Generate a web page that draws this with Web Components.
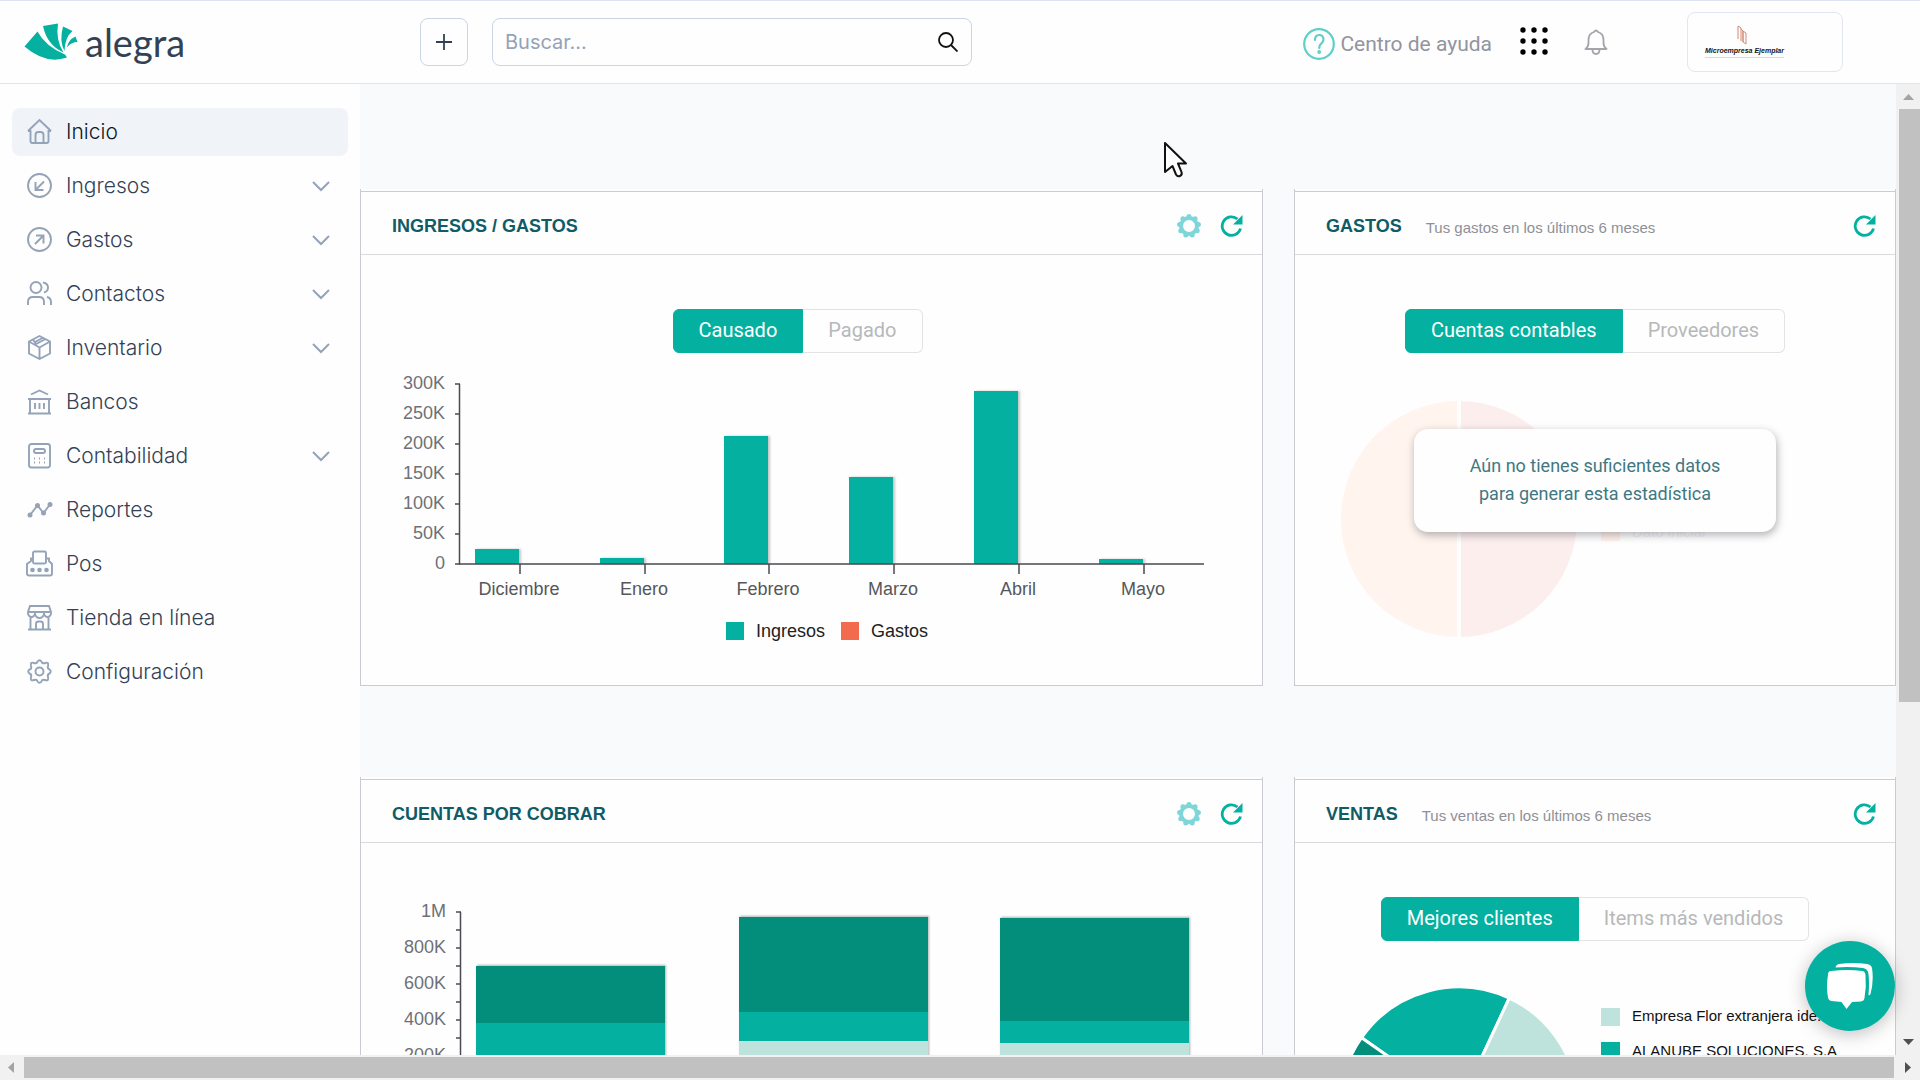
<!DOCTYPE html>
<html lang="es">
<head>
<meta charset="UTF-8">
<meta name="viewport" content="width=device-width, initial-scale=1">
<title>Alegra</title>
<style>
  body {
    margin: 0;
    height: 100vh;
    display: grid;
    grid-template-columns: 360px 1fr 24px;
    grid-template-rows: 84px 1fr 25px;
    overflow: hidden;
    background: #fefefe;
    color: #334155;
    font-family: 'Liberation Sans', Arial, sans-serif;
    --teal: #04b1a0;
    --teal-dark: #028e7a;
    --teal-light: #bde3dc;
  }
  app-header { grid-column: 1 / -1; }
  main {
    background: #f8fafc;
    overflow: hidden;
    padding-top: 105px;
    display: grid;
    grid-template-columns: 3fr 2fr;
    grid-auto-rows: max-content;
    gap: 91px 31px;
  }
  .horizontal { grid-column: 1 / -1; }
</style>
</head>
<body>
  <app-header></app-header>

  <side-menu>
    <menu-item icon="home" active>Inicio</menu-item>
    <menu-item icon="income" expandable>Ingresos</menu-item>
    <menu-item icon="expense" expandable>Gastos</menu-item>
    <menu-item icon="contacts" expandable>Contactos</menu-item>
    <menu-item icon="inventory" expandable>Inventario</menu-item>
    <menu-item icon="bank">Bancos</menu-item>
    <menu-item icon="calculator" expandable>Contabilidad</menu-item>
    <menu-item icon="reports">Reportes</menu-item>
    <menu-item icon="pos">Pos</menu-item>
    <menu-item icon="store">Tienda en línea</menu-item>
    <menu-item icon="settings">Configuración</menu-item>
  </side-menu>

  <main>
    <panel-card title-text="Ingresos / Gastos" configurable>
      <toggle-group class="shift" options="Causado|Pagado"></toggle-group>
      <bar-chart></bar-chart>
    </panel-card>
    <panel-card title-text="Gastos" subtitle="Tus gastos en los últimos 6 meses">
      <toggle-group options="Cuentas contables|Proveedores"></toggle-group>
      <empty-pie>Aún no tienes suficientes datos<br>para generar esta estadística</empty-pie>
    </panel-card>
    <panel-card title-text="Cuentas por cobrar" configurable>
      <stacked-chart></stacked-chart>
    </panel-card>
    <panel-card title-text="Ventas" subtitle="Tus ventas en los últimos 6 meses">
      <toggle-group options="Mejores clientes|Items más vendidos"></toggle-group>
      <sales-pie></sales-pie>
    </panel-card>
  </main>

  <scroll-bar></scroll-bar>
  <scroll-bar class="horizontal" horizontal></scroll-bar>
  <chat-button></chat-button>
  <mouse-pointer></mouse-pointer>

<script>
// Iconos compartidos del menú lateral
const ICONS = {
  home: '<path d="M1 12 12.500 1 24 12M1 12h2.500v10q0 2 2 2h14q2 0 2-2V12H24"/><path d="M8.500 24v-8q0-3 3-3h2q3 0 3 3v8"/>',
  income: '<circle cx="12.500" cy="12.500" r="11.500"/><path d="M17 8.500 8.500 17M8.500 9v8h8"/>',
  expense: '<circle cx="12.500" cy="12.500" r="11.500"/><path d="M8 17l8.500-8.500M9 8.500h7.500v8"/>',
  contacts: '<circle cx="9" cy="6.500" r="5.500"/><path d="M1 24v-3q0-5 5-5h6q5 0 5 5v3M16 1.500q5 1 5 5t-4 5M20 16q4 1 4 5v3"/>',
  inventory: '<path d="M12.500 1 23 6.500v12L12.500 24 2 18.500v-12zM2 6.500l10.500 6 10.500-6M12.500 12.500V24M6 4.500l3 4.500 9.500-5M15.500 3 7 7.500"/>',
  bank: '<path d="M4 5.500 12.500 1.500 21 5.500M1 10h23M3 10v14M22 10v14M1 24.500h23M8 14v6M12.500 14v6M17 14v6"/>',
  calculator: '<rect x="2" y="1" width="21" height="23.500" rx="2.500"/><rect x="7" y="6" width="11" height="4" rx="2"/><path d="M7 15.500h1M12 15.500h1M17 15.500h1M7 19.500h1M12 19.500h1M17 19.500h1"/>',
  reports: '<path d="M3 18 10.500 8.500 16.500 16 23 7.500"/><g fill="currentColor" stroke="none"><circle cx="3" cy="18" r="2.500"/><circle cx="10.500" cy="8.500" r="2.500"/><circle cx="16.500" cy="16" r="2.500"/><circle cx="23" cy="7.500" r="2.500"/></g>',
  pos: '<rect x="6" y="0.500" width="13" height="12" rx="1.500"/><path d="M6 7.500H4V10L0 13v9.500q0 2 2 2h21q2 0 2-2V13l-3-3V7.500h-3"/><g fill="currentColor" stroke="none"><circle cx="5.500" cy="19" r="2.300"/><circle cx="12.500" cy="19" r="2.300"/><circle cx="19.500" cy="19" r="2.300"/></g>',
  store: '<path d="M3 1h19l2 6v2q-1 3-3.500 3T17 9q-1 4-4.500 4T8 9q-1 3-3.500 3T1 9V7zM2 7h21M3.500 12v12.500M21.500 12v12.500M1 24.500h23M9 24v-5q0-2.500 2.500-2.500h2Q16 16.500 16 19v5M8 7v2M17 7v2"/>',
  settings: '<circle cx="12.500" cy="12.500" r="4"/><path d="M10.500 2.500Q12.500 0 14.500 2.500 15 5 18 4 22 2.500 21 7q-1 2.500 1.500 3.500Q25 12.500 22.500 14.500 20 15.500 21 18q1 4.500-3 3-3-1-3.500 1.500-2 2.500-4 0Q10 20 7 21q-4 1.500-3-3 1-2.500-1.500-3.500Q0 12.500 2.500 10.500 5 9.500 4 7 3 2.500 7 4q3 1 3.500-1.500z"/>'
};

// Clase base: cada componente devuelve su plantilla en template()
class BaseElement extends HTMLElement {
  connectedCallback() {
    if (this.shadowRoot) return;
    const template = document.createElement('template');
    template.innerHTML = this.template();
    this.attachShadow({ mode: 'open' }).appendChild(template.content.cloneNode(true));
  }
}

// Barra superior
class AppHeader extends BaseElement {
  template() {
    return `
      <style>
        :host {
          display: grid;
          grid-template-columns: 420px 1fr auto;
          align-items: center;
          box-sizing: border-box;
          border-top: 1px solid #dfe3f1;
          border-bottom: 1px solid #e0e6ee;
          background: #fefefe;
        }
        a { color: inherit; text-decoration: none; }
        .brand { display: flex; align-items: center; gap: 7px; padding: 0 0 0 24px; height: 48px; }
        .brand span { font: 400 38px/48px Lato, sans-serif; color: #334155; }
        .tools { display: flex; gap: 24px; }
        button { border: 0; background: none; padding: 0; color: inherit; display: block; }
        .add, .search { box-sizing: border-box; height: 48px; border: 1px solid #cbd5e8; border-radius: 8px; }
        .add { width: 48px; display: grid; place-items: center; color: #334155; }
        .search { width: 480px; display: flex; align-items: center; padding: 0 13px 0 12px; color: #111; }
        input { flex: 1; min-width: 0; border: 0; outline: 0; padding: 0; background: none; font: 20px/24px Inter, sans-serif; color: #334155; }
        input::placeholder { color: #94a3b8; opacity: 1; }
        .right { display: flex; align-items: center; padding-right: 77px; }
        .help { display: flex; align-items: center; gap: 5px; margin-top: 3px; font: 21px/32px Roboto, sans-serif; color: #9294a0; }
        .apps { margin: 0 36px 0 28px; }
        .bell { margin: 3px 79px 0 0; }
        .company {
          box-sizing: border-box; width: 156px; height: 60px; padding: 12px 0 0 17px;
          border: 1px solid #e2e6f3; border-radius: 8px;
          display: flex; flex-direction: column; align-items: flex-start;
        }
        .company svg { margin-left: 32px; }
        .company span { font: italic bold 7px/12px 'Liberation Sans', sans-serif; color: #111; border-bottom: 1px solid #f3cfc8; white-space: nowrap; }
      </style>
      <a class="brand" href="#" aria-label="Alegra">
        <svg width="54" height="38" viewBox="24 23 54 38" fill="#04b1a0">
          <path d="M24.500 46.500 37.500 31.500Q45 46 65 54.500L67 57.500Q46 65 24.500 46.500z"/>
          <path d="M43 26 58 23.500Q55.500 40 63.500 52.500 47 45 43 26z"/>
          <path d="M63 26.500 72.500 31Q65 37 64.500 51 59 41 63 26.500z"/>
          <path d="M75.500 36.500 77.500 42Q71 42 67 47.500 68 40 75.500 36.500z"/>
        </svg>
        <span>alegra</span>
      </a>
      <div class="tools">
        <button class="add" aria-label="Nuevo">
          <svg width="16" height="16" viewBox="0 0 16 16" stroke="currentColor" stroke-width="1.800"><path d="M8 0v16M0 8h16"/></svg>
        </button>
        <label class="search">
          <input type="search" placeholder="Buscar..." aria-label="Buscar">
          <svg width="20" height="20" viewBox="0 0 20 20" fill="none" stroke="currentColor" stroke-width="1.800"><circle cx="8" cy="8" r="7"/><path d="M13 13l6.500 6.500"/></svg>
        </label>
      </div>
      <div class="right">
        <a class="help" href="#">
          <svg width="32" height="32" viewBox="0 0 32 32" fill="none" stroke="#5fcfc9" stroke-width="2.200"><circle cx="16" cy="16" r="14.800"/><path d="M12 12q0-5 4.200-5t4.300 4.500q0 2.500-2.300 4.200-2 1.500-2 4.300" stroke-linecap="round"/><circle cx="16.200" cy="24" r=".8"/></svg>
          Centro de ayuda
        </a>
        <button class="apps" aria-label="Aplicaciones">
          <svg width="28" height="28" viewBox="0 0 28 28" fill="#000">
            ${[3, 14, 25].map(y => [3, 14, 25].map(x => `<circle cx="${x}" cy="${y}" r="2.700"/>`).join('')).join('')}
          </svg>
        </button>
        <button class="bell" aria-label="Notificaciones">
          <svg width="24" height="26" viewBox="0 0 24 26" fill="none" stroke="#a3a5ab" stroke-width="1.800" stroke-linejoin="round"><path d="M1.500 20q3-2.500 3-6v-3q0-6.500 5.500-8 2-3 4 0 5.500 1.500 5.500 8v3q0 3.500 3 6zM8.500 20.500q0 4.500 3.500 4.500t3.500-4.500"/></svg>
        </button>
        <a class="company" href="#">
          <svg width="10" height="20" viewBox="0 0 10 20" fill="none" stroke="#d08a70"><path d="M1 1v13M1 1l3 2v13M4 4l2 2v11M6 6l3 2v11L6 17z"/></svg>
          <span>Microempresa Ejemplar</span>
        </a>
      </div>
    `;
  }
}

// Menú lateral
class SideMenu extends BaseElement {
  template() {
    return `
      <style>
        :host { display: block; background: #fefefe; padding: 24px 12px; box-sizing: border-box; overflow: hidden; }
        nav { display: flex; flex-direction: column; gap: 6px; }
      </style>
      <nav><slot></slot></nav>
    `;
  }
}

class MenuItem extends BaseElement {
  template() {
    const chevron = this.hasAttribute('expandable')
      ? '<svg class="chevron" width="18" height="12" viewBox="0 0 18 12"><path d="M1 2l8 8 8-8"/></svg>'
      : '';
    return `
      <style>
        :host { display: block; border-radius: 8px; }
        :host([active]) { background: #f0f4f9; color: #0f172a; }
        a {
          display: flex; align-items: center; height: 48px; padding: 0 18px 0 15px; gap: 13px;
          color: inherit; text-decoration: none;
          font: 300 21px/24px Inter, sans-serif;
        }
        svg { fill: none; stroke: #94a3b8; stroke-width: 1.900; color: #94a3b8; overflow: visible; flex: none; }
        .chevron { margin-left: auto; stroke-width: 2; }
      </style>
      <a href="#"><svg width="26" height="26" viewBox="0 0 26 26">${ICONS[this.getAttribute('icon')]}</svg><slot></slot>${chevron}</a>
    `;
  }
}

// Tarjeta con encabezado
class PanelCard extends BaseElement {
  template() {
    const subtitle = this.getAttribute('subtitle');
    // engranaje de nueve dientes
    let teeth = '';
    for (let i = 0; i < 9; i++) {
      const a = i * Math.PI * 2 / 9 - Math.PI / 2;
      teeth += `<circle cx="${(12 + 9.5 * Math.cos(a)).toFixed(1)}" cy="${(12 + 9.5 * Math.sin(a)).toFixed(1)}" r="2.500"/>`;
    }
    const gear = this.hasAttribute('configurable')
      ? `<button aria-label="Configurar"><svg width="24" height="24" viewBox="0 0 24 24"><g fill="#7fd6d8">${teeth}</g><circle cx="12" cy="12" r="8" fill="none" stroke="#7fd6d8" stroke-width="4"/></svg></button>`
      : '';
    return `
      <style>
        :host {
          display: block; background: #fefefe; padding-top: 2px;
          border: 1px solid #c9cbd0; border-top: 0;
        }
        header {
          box-sizing: border-box; height: 64px; display: flex; align-items: center;
          padding: 6px 19px 0 31px; border-top: 1px solid #c9cbd0; border-bottom: 1px solid #d9dadd;
        }
        h2 { margin: 0; font: bold 18px/24px 'Liberation Sans', sans-serif; color: #0f5b66; text-transform: uppercase; }
        p { margin: 3px 0 0 24px; font: 15px/24px 'Liberation Sans', sans-serif; color: #8e9096; }
        .actions { margin-left: auto; display: flex; align-items: center; gap: 19px; }
        button { border: 0; background: none; padding: 0; display: block; }
        svg { display: block; }
        ::slotted(toggle-group) { margin: 54px 0 0; }
        ::slotted(.shift) { margin-right: 28px; }
      </style>
      <header>
        <h2>${this.getAttribute('title-text')}</h2>
        ${subtitle ? `<p>${subtitle}</p>` : ''}
        <div class="actions">
          ${gear}
          <button aria-label="Actualizar">
            <svg width="23" height="22" viewBox="0 0 23 22" fill="none" stroke="#04b1a0" stroke-width="2.800"><path d="M20.500 13.500A9.300 9.300 0 1 1 17.500 4"/><path d="M22.500 0v9.500H13z" fill="#04b1a0" stroke="none"/></svg>
          </button>
        </div>
      </header>
      <slot></slot>
    `;
  }
}

// Selector de dos opciones
class ToggleGroup extends BaseElement {
  template() {
    const [first, second] = this.getAttribute('options').split('|');
    return `
      <style>
        :host { display: flex; justify-content: center; }
        button {
          box-sizing: border-box; height: 44px; padding: 0 25px 2px; background: #fefefe;
          border: 1px solid #e2e3e5; border-left: 0; border-radius: 0 6px 6px 0;
          font: 20px/24px Roboto, sans-serif; color: #b7b8ba;
        }
        button[aria-pressed="true"] {
          background: var(--teal); border: 1px solid var(--teal); border-radius: 6px 0 0 6px; color: #fff;
        }
      </style>
      <button aria-pressed="true">${first}</button><button aria-pressed="false">${second}</button>
    `;
  }
}

const CHART_STYLE = `
  :host { display: block; }
  svg { display: block; width: 100%; }
  text { font: 18px 'Liberation Sans', sans-serif; fill: #6f7176; }
  .month { fill: #55575c; text-anchor: middle; }
  .value { text-anchor: end; }
  .axis { fill: none; stroke: #4a4b50; stroke-width: 1.500; }
  .bar { filter: drop-shadow(2px 0 1px rgba(0, 0, 0, .22)); }
`;

// Gráfico de barras mensual
class BarChart extends BaseElement {
  template() {
    const months = [['Diciembre', 15], ['Enero', 6], ['Febrero', 128], ['Marzo', 87], ['Abril', 173], ['Mayo', 5]];
    const base = 211;
    let marks = '';
    for (let i = 0; i <= 6; i++) {
      const y = base - i * 30;
      marks += `<path class="axis" d="M94 ${y}h5"/><text class="value" x="84" y="${y + 5}">${i ? i * 50 + 'K' : 0}</text>`;
    }
    const bars = months.map(([name, height], i) => {
      const x = 159 + Math.round(i * 124.7);
      return `<rect class="bar" x="${x - 45}" y="${base - height}" width="44" height="${height}" fill="#04b1a0"/>
        <path class="axis" d="M${x} ${base}v10"/><text class="month" x="${x - 1}" y="242">${name}</text>`;
    }).join('');
    return `
      <style>
        ${CHART_STYLE}
        ul { list-style: none; display: flex; justify-content: center; gap: 16px; margin: 19px 0 45px; padding: 0 0 0 31px; }
        li { display: flex; align-items: center; gap: 12px; height: 19px; font: 18px/18px 'Liberation Sans', sans-serif; color: #222; }
        i { width: 18px; height: 18px; background: var(--teal); }
        .out { background: #f26b4e; }
      </style>
      <svg viewBox="0 0 901 249">${marks}${bars}<path class="axis" d="M98.500 31v180H843"/></svg>
      <ul><li><i></i>Ingresos</li><li><i class="out"></i>Gastos</li></ul>
    `;
  }
}

// Gráfico de barras apiladas
class StackedChart extends BaseElement {
  template() {
    const base = 249;
    // [x, alto total, alto medio, alto claro]
    const data = [[115, 126, 69, 20], [378, 175, 80, 51], [639, 174, 71, 49]];
    let marks = '';
    for (let i = 1; i <= 10; i++) {
      const y = base - i * 18;
      marks += `<path class="axis" d="M95 ${y}h5"/>`;
      if (i % 2 === 0) marks += `<text class="value" x="85" y="${y + 5}">${i === 10 ? '1M' : i * 100 + 'K'}</text>`;
    }
    const bars = data.map(([x, total, middle, light]) => `
      <g class="bar">
        <rect x="${x}" y="${base - total}" width="189" height="${total}" fill="#028e7a"/>
        <rect x="${x}" y="${base - middle}" width="189" height="${middle}" fill="#04b1a0"/>
        <rect x="${x}" y="${base - light}" width="189" height="${light}" fill="#bde3dc"/>
      </g>`).join('');
    return `
      <style>
        ${CHART_STYLE}
        .bar { filter: drop-shadow(1px -1px 1px rgba(0, 0, 0, .3)); }
      </style>
      <svg viewBox="0 0 901 320">${marks}${bars}<path class="axis" d="M99.500 69v180H843"/></svg>
    `;
  }
}

// Torta sin datos, con aviso encima
class EmptyPie extends BaseElement {
  template() {
    return `
      <style>
        :host { display: block; position: relative; }
        svg { display: block; width: 100%; }
        text { font: 15px 'Liberation Sans', sans-serif; fill: #f1f1f3; }
        .notice {
          position: absolute; top: 76px; left: 50%; transform: translateX(-50%);
          box-sizing: border-box; width: 362px; padding: 23px 0 24px;
          background: #fefefe; border-radius: 14px; box-shadow: 1px 3px 9px rgba(60, 60, 70, .4);
          font: 18px/28px Roboto, sans-serif; color: #3f7883; text-align: center;
        }
      </style>
      <svg viewBox="0 0 600 300">
        <path d="M164 48a118 118 0 0 0 0 236z" fill="#fff4ee"/>
        <path d="M164 48a118 118 0 0 1 0 236z" fill="#fdeeee"/>
        <path d="M164 47v238" stroke="#fefefe" stroke-width="4"/>
        <rect x="306" y="170" width="19" height="18" fill="#fff1ea"/>
        <text x="337" y="184">Dato inicial</text>
      </svg>
      <div class="notice"><slot></slot></div>
    `;
  }
}

// Torta de mejores clientes
class SalesPie extends BaseElement {
  template() {
    const cx = 164, cy = 165, r = 119;
    const point = deg => {
      const a = (deg - 90) * Math.PI / 180;
      return `${(cx + r * Math.cos(a)).toFixed(1)} ${(cy + r * Math.sin(a)).toFixed(1)}`;
    };
    const slice = (from, to, color) =>
      `<path d="M${cx} ${cy}L${point(from)}A${r} ${r} 0 0 1 ${point(to)}z" fill="${color}" stroke="#fefefe" stroke-width="3"/>`;
    return `
      <style>
        :host { display: block; }
        svg { display: block; width: 100%; }
        text { font: 15px 'Liberation Sans', sans-serif; fill: #111; }
      </style>
      <svg viewBox="0 0 600 332">
        ${slice(-55, 25, '#04b1a0')}${slice(25, 160, '#bde3dc')}${slice(160, 305, '#028e7a')}
        <rect x="306" y="67" width="19" height="18" fill="#bde3dc"/>
        <text x="337" y="80">Empresa Flor extranjera ide...</text>
        <rect x="306" y="101" width="19" height="18" fill="#04b1a0"/>
        <text x="337" y="115">ALANUBE SOLUCIONES, S.A</text>
      </svg>
    `;
  }
}

// Barra de desplazamiento
class ScrollBar extends BaseElement {
  template() {
    return `
      <style>
        :host { display: flex; flex-direction: column; align-items: center; background: #f1f1f1; }
        svg { width: 24px; height: 25px; flex: none; }
        .thumb { width: 21px; background: #c1c1c1; margin-left: 2px; flex: 644; }
        .rest { flex: 356; }
        :host([horizontal]) { flex-direction: row; }
        :host([horizontal]) .thumb { width: auto; height: 21px; margin: 0 2px 0 0; flex: 1; }
        :host([horizontal]) .rest { display: none; }
      </style>
      ${this.hasAttribute('horizontal')
        ? '<svg viewBox="0 0 24 25"><path d="M14 7v11l-6-5.500z" fill="#a3a3a3"/></svg><div class="thumb"></div><svg viewBox="0 0 24 25"><path d="M9 7v11l6-5.500z" fill="#505050"/></svg>'
        : '<svg viewBox="0 0 24 25"><path d="M7 16h11l-5.500-6z" fill="#a3a3a3"/></svg><div class="thumb"></div><div class="rest"></div><svg viewBox="0 0 24 25"><path d="M7 9h11l-5.500 6z" fill="#505050"/></svg>'}
    `;
  }
}

// Botón flotante de chat
class ChatButton extends BaseElement {
  template() {
    return `
      <style>
        :host { position: fixed; right: 25px; bottom: 49px; }
        button {
          width: 90px; height: 90px; padding: 0; border: 0; border-radius: 50%; background: var(--teal);
          box-shadow: 0 3px 18px rgba(0, 0, 0, .25); display: grid; place-items: center;
        }
      </style>
      <button aria-label="Chat">
        <svg width="48" height="46" viewBox="0 0 48 46" fill="#fff">
          <path d="M5 8q17-2 31 0 3 0 3.500 4 1 12-1 23-.5 3-3.500 3.500l-9 .5-5.500 7-5-7-10-1q-3-.5-3.500-3.500-2-11 0-23Q2 8 5 8z"/>
          <path d="M9.500 4.500Q10 1.500 13 1q14-2 28 0 4 .5 5 4 2 13-1.500 26-1 2-2 1 1-12 0-21-.5-5-5.500-6-13-1.500-27.500-.5z"/>
        </svg>
      </button>
    `;
  }
}

class MousePointer extends BaseElement {
  template() {
    return `
      <style>
        :host { position: fixed; left: 1163px; top: 141px; pointer-events: none; }
        svg { display: block; }
      </style>
      <svg width="26" height="38" viewBox="0 0 26 38"><path d="M2 2v29l7.500-6 3.500 8.500q1.500 2.500 4 1.500 2.500-1.500 1.500-4L15 22.500h8z" fill="#fff" stroke="#111" stroke-width="2" stroke-linejoin="round"/></svg>
    `;
  }
}

customElements.define('app-header', AppHeader);
customElements.define('side-menu', SideMenu);
customElements.define('menu-item', MenuItem);
customElements.define('panel-card', PanelCard);
customElements.define('toggle-group', ToggleGroup);
customElements.define('bar-chart', BarChart);
customElements.define('stacked-chart', StackedChart);
customElements.define('empty-pie', EmptyPie);
customElements.define('sales-pie', SalesPie);
customElements.define('scroll-bar', ScrollBar);
customElements.define('chat-button', ChatButton);
customElements.define('mouse-pointer', MousePointer);
</script>
</body>
</html>
